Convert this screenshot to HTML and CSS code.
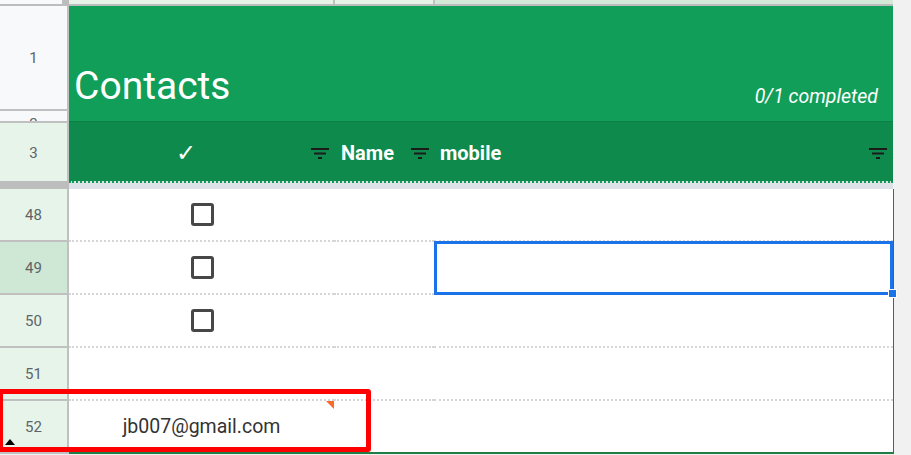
FILE: index.html
```html
<!DOCTYPE html>
<html lang="en">
<head>
    <meta charset="UTF-8">
    <meta name="viewport" content="width=device-width, initial-scale=1.0">
    <title>Contacts</title>
    <link rel="stylesheet" href="styles.css">
</head>
<body>
    <div class="screen">
        <div class="sheet">
            <div class="colbar">
                <div class="corner"></div>
                <div class="handle"></div>
                <div class="colhead colhead-b"></div>
                <div class="colhead colhead-c"></div>
                <div class="colhead colhead-d"></div>
            </div>

            <div class="frozen">
                <div class="rowheads">
                    <div class="rh rh-1">1</div>
                    <div class="rh rh-2">2</div>
                    <div class="rh rh-3">3</div>
                </div>
                <div class="frozen-cells">
                    <div class="banner">
                        <span class="title">Contacts</span>
                        <span class="progress">0/1 completed</span>
                    </div>
                    <div class="thead">
                        <div class="th th-check">
                            <span class="th-label">&#10003;</span>
                            <svg class="filter" width="18" height="11" viewBox="0 0 18 11"><rect x="0" y="0" width="18" height="2"/><rect x="3" y="4.5" width="12" height="2"/><rect x="7" y="9" width="4" height="2"/></svg>
                        </div>
                        <div class="th th-name">
                            <span class="th-label">Name</span>
                            <svg class="filter" width="18" height="11" viewBox="0 0 18 11"><rect x="0" y="0" width="18" height="2"/><rect x="3" y="4.5" width="12" height="2"/><rect x="7" y="9" width="4" height="2"/></svg>
                        </div>
                        <div class="th th-mobile">
                            <span class="th-label">mobile</span>
                            <svg class="filter" width="18" height="11" viewBox="0 0 18 11"><rect x="0" y="0" width="18" height="2"/><rect x="3" y="4.5" width="12" height="2"/><rect x="7" y="9" width="4" height="2"/></svg>
                        </div>
                    </div>
                </div>
            </div>

            <div class="freeze-bar">
                <div class="freeze-head"></div>
                <div class="freeze-line"></div>
            </div>

            <div class="rows">
                <div class="row">
                    <div class="rh">48</div>
                    <div class="cell cell-b"><span class="checkbox"></span></div>
                    <div class="cell cell-c"></div>
                    <div class="cell cell-d"></div>
                </div>
                <div class="row">
                    <div class="rh rh-active">49</div>
                    <div class="cell cell-b"><span class="checkbox"></span></div>
                    <div class="cell cell-c"></div>
                    <div class="cell cell-d selected"><span class="fill-handle"></span></div>
                </div>
                <div class="row">
                    <div class="rh">50</div>
                    <div class="cell cell-b"><span class="checkbox"></span></div>
                    <div class="cell cell-c"></div>
                    <div class="cell cell-d"></div>
                </div>
                <div class="row">
                    <div class="rh">51</div>
                    <div class="cell cell-b"></div>
                    <div class="cell cell-c"></div>
                    <div class="cell cell-d"></div>
                </div>
                <div class="row">
                    <div class="rh rh-last">52<span class="collapse-mark"></span></div>
                    <div class="cell cell-b"><span class="email">jb007@gmail.com</span><span class="note-mark"></span></div>
                    <div class="cell cell-c"></div>
                    <div class="cell cell-d"></div>
                </div>
            </div>
        </div>

        <!-- red annotation around the last row -->
        <div class="highlight"></div>
    </div>
</body>
</html>
```

FILE: styles.css
```css
body {
    margin: 0;
    font-family: Roboto, "Liberation Sans", sans-serif;
    background-color: #f1f1f1;
    overflow: hidden;
}
.screen {
    position: relative;
    width: 911px;
    height: 455px;
}
.sheet {
    width: 894px;
    display: flex;
    flex-direction: column;
}

/* column letters strip (cut off at the top) */
.colbar {
    display: flex;
    width: 893px;
    height: 4px;
    border-bottom: 2px solid #bdbdbd;
}
.corner {
    width: 62px;
    background-color: #f8f9fa;
}
.handle {
    width: 7px;
    background-color: #bdbdbd;
}
.colhead {
    background-color: #e7f3e9;
}
.colhead-b {
    width: 264px;
    border-right: 2px solid #c0c0c0;
}
.colhead-c {
    width: 98px;
    border-right: 2px solid #c0c0c0;
}
.colhead-d {
    flex: 1;
    background-color: #d3e8d7;
}

/* frozen rows 1-3 */
.frozen {
    display: flex;
    width: 893px;
}
.rowheads {
    width: 67px;
    border-right: 2px solid #c0c0c0;
}
.rh {
    display: flex;
    justify-content: center;
    align-items: center;
    font-size: 15px;
    color: #5f6368;
    background-color: #e6f4ea;
    box-sizing: border-box;
}
.rh-1 {
    height: 105px;
    background-color: #f8f9fa;
    border-bottom: 2px solid #c0c0c0;
}
.rh-2 {
    height: 12px;
    align-items: flex-start;
    padding-top: 4px;
    overflow: hidden;
    background-color: #f8f9fa;
    border-bottom: 2px solid #c0c0c0;
}
.rh-3 {
    height: 58px;
    padding-top: 2px;
}
.frozen-cells {
    flex: 1;
}
.banner {
    height: 116px;
    box-sizing: border-box;
    display: flex;
    justify-content: space-between;
    align-items: flex-end;
    padding: 0 15px 13px 5px;
    background-color: #119e58;
    border-bottom: 1px solid #0c7f45;
    color: #fff;
}
.title {
    font-size: 39px;
    line-height: 44px;
}
.progress {
    font-size: 19.5px;
    line-height: 22px;
    font-style: italic;
}
.thead {
    display: grid;
    grid-template-columns: 265px 100px 1fr;
    height: 59px;
    box-sizing: border-box;
    padding-top: 3px;
    background-color: #0e8a4c;
    color: #fff;
    font-size: 20px;
    font-weight: bold;
}
.th {
    display: flex;
    align-items: center;
}
.th-label {
    flex: 1;
}
.th-check .th-label {
    text-align: center;
    padding-right: 8px;
    font-family: "DejaVu Sans", sans-serif;
    font-weight: normal;
    font-size: 24px;
}
.th-name .th-label {
    padding-left: 7px;
}
.th-mobile .th-label {
    padding-left: 6px;
}
.filter {
    fill: #1b1b1b;
    margin-right: 5px;
}
.th-mobile .filter {
    margin-right: 6px;
}

.freeze-bar {
    display: flex;
    width: 893px;
    height: 8px;
}
.freeze-head {
    width: 69px;
    background-color: #bdbdbd;
}
.freeze-line {
    flex: 1;
    background-color: #dde1e8;
    border-top: 2px dotted #0f9d58;
}

/* body rows */
.rows {
    border-right: 1px solid #1e7e45;
}
.row {
    display: grid;
    grid-template-columns: 69px 265px 100px 1fr;
    height: 53px;
}
.row .rh {
    position: relative;
    border-right: 2px solid #c0c0c0;
    border-bottom: 2px solid #c0c0c0;
}
.rh-active {
    background-color: #cfe8d6 !important;
}
.cell {
    position: relative;
    display: flex;
    justify-content: center;
    align-items: center;
    background-color: #fff;
    border-bottom: 2px dotted #d6d6d6;
}
.row:last-child .cell {
    border-bottom: 2px solid #1e7e45;
}
.checkbox {
    width: 23px;
    height: 23px;
    box-sizing: border-box;
    border: 3px solid #474747;
    border-radius: 3px;
    margin-left: 1px;
}
.email {
    font-size: 19.5px;
    color: #333;
}
.note-mark {
    position: absolute;
    top: 0;
    right: 0;
    width: 0;
    height: 0;
    border-left: 8px solid transparent;
    border-top: 8px solid #fa6a2a;
}
.collapse-mark {
    position: absolute;
    left: 5px;
    bottom: 7px;
    width: 0;
    height: 0;
    border-left: 5px solid transparent;
    border-right: 5px solid transparent;
    border-bottom: 6px solid #000;
}
.selected::after {
    content: "";
    position: absolute;
    top: -1px;
    left: 0;
    right: 0;
    bottom: -2px;
    border: 3px solid #1a73e8;
}
.fill-handle {
    position: absolute;
    right: -4px;
    bottom: -5px;
    width: 7px;
    height: 7px;
    background-color: #1a73e8;
    border: 1px solid #fff;
    z-index: 2;
}

.highlight {
    position: absolute;
    left: -2px;
    top: 389px;
    width: 373px;
    height: 63px;
    box-sizing: border-box;
    border: 5px solid #ff0000;
    border-radius: 3px;
}
```
